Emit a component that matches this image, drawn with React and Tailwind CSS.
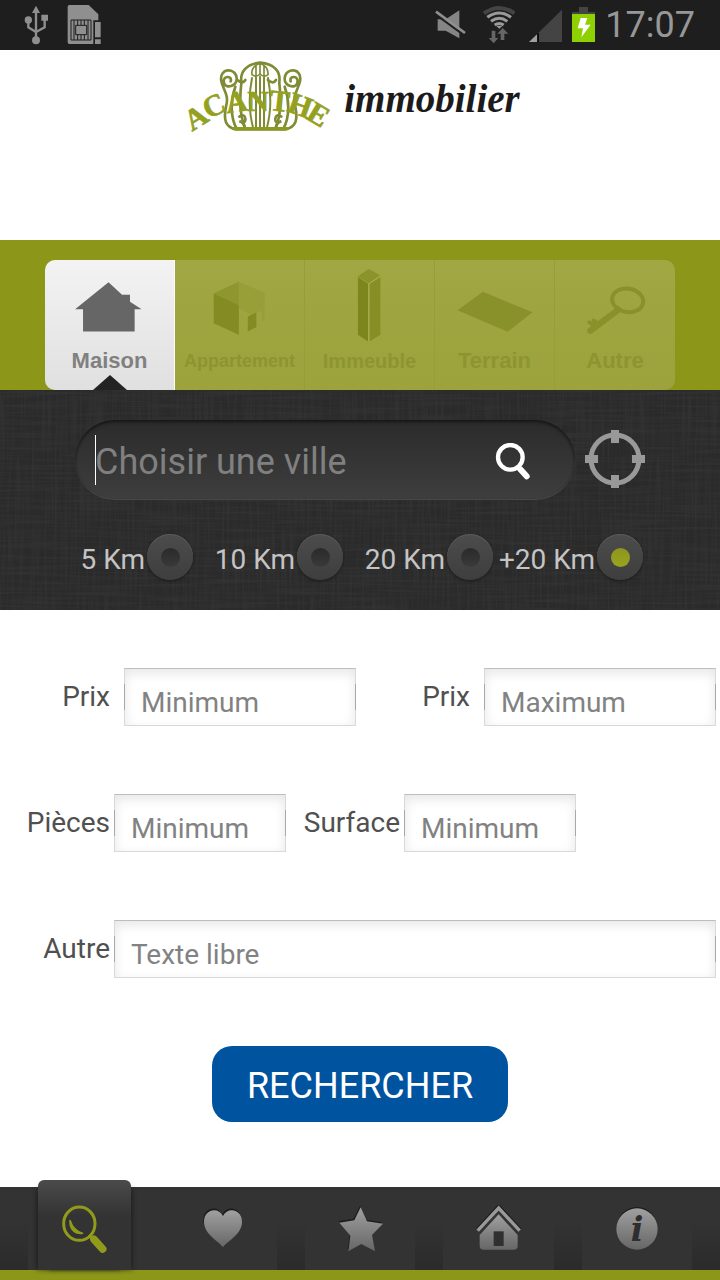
import { useState } from "react";

const TABS = [
    { key: "maison", title: "Maison", size: "text-[22px]", box: "0 0 390 270" },
    { key: "appartement", title: "Appartement", size: "text-lg", box: "0 0 390 270" },
    { key: "immeuble", title: "Immeuble", size: "text-xl", box: "0 0 390 270" },
    { key: "terrain", title: "Terrain", size: "text-[22px]", box: "0 0 360 270" },
    { key: "autre", title: "Autre", size: "text-[22px]", box: "0 0 360 270" },
];

const DISTANCES = ["5 Km", "10 Km", "20 Km", "+20 Km"];

const NAV_ITEMS = [
    { key: "search", title: "Rechercher" },
    { key: "favorites", title: "Favoris" },
    { key: "selection", title: "Sélection" },
    { key: "home", title: "Accueil" },
    { key: "info", title: "Informations" },
];

const TAB_ICONS = {
    maison: (
        <path fill="#666" d="M192 66 233 104h24v21l35 23h-21v67H115v-67H91z" />
    ),
    appartement: (
        <>
            <path fill="#999f38" d="M193 65 271 98v82l-9 4v-32l-30 14-39-21z" />
            <path fill="#8e9630" d="M117 100 193 65v73z" />
            <path fill="#838b23" d="M117 100 193 136v89l-76-35z" />
            <path fill="#838b23" d="M220 170 246 158v44l-26 13z" />
        </>
    ),
    immeuble: (
        <>
            <path fill="#8b932b" d="M193 26 228 46 193 70 160 48z" />
            <path fill="#7d851d" d="M160 50 191 71v174l-31-20z" />
            <path fill="#868e26" d="M195 71 228 50v175l-33 20z" />
            <path fill="none" stroke="#a9af55" strokeWidth="3" d="M193 245V71L228 48" />
        </>
    ),
    terrain: <path fill="#89922a" d="M145 95 295 157 220 216 68 151z" />,
    autre: (
        <g fill="none" stroke="#89922a">
            <ellipse cx="218" cy="121" rx="47" ry="35" strokeWidth="12" transform="rotate(10 218 121)" />
            <path d="M190 149 106 212" strokeWidth="19" strokeLinecap="round" />
            <path d="M103 187 122 200M116 182 128 190" strokeWidth="12" strokeLinecap="round" />
        </g>
    ),
};

const NAV_ICONS = {
    search: (
        <g transform="translate(-5 -1)">
            <ellipse cx="60" cy="57" rx="47" ry="50" fill="none" stroke="#919b1b" strokeWidth="9" />
            <path d="M32 46c-3 26 14 44 39 40-16-4-31-14-39-40z" fill="#919b1b" stroke="#919b1b" strokeWidth="4" />
            <path d="M90 90 99 100" stroke="#919b1b" strokeWidth="10" />
            <path d="M104 104 130 133" stroke="#919b1b" strokeWidth="23" strokeLinecap="round" />
        </g>
    ),
    favorites: (
        <>
            <path fill="#1c1c1c" d="M73 122C59 102 16 83 16 46c0-40 44-46 57-18 13-28 57-22 57 18 0 37-43 56-57 76z" />
            <path fill="url(#navGrey)" d="M75 127C61 107 18 88 18 51c0-40 44-46 57-18 13-28 57-22 57 18 0 37-43 56-57 76z" />
        </>
    ),
    selection: (
        <>
            <path fill="#1c1c1c" d="M72 2 91 44 138 52 106 85 115 134 74 112 35 134 41 87 8 48 53 41z" />
            <path fill="url(#navGrey)" d="M74 7 93 49 141 56 108 90 117 139 76 117 37 139 43 92 10 53 55 46z" />
        </>
    ),
    home: (
        <>
            <path d="M11 74 74 5 137 74" fill="none" stroke="#1c1c1c" strokeWidth="12" />
            <path fill="url(#navGrey)" d="M74 28 131 90v32q0 12-12 12H29q-12 0-12-12V90z" />
            <path d="M11 77 74 9 137 77" fill="none" stroke="#999" strokeWidth="10" />
            <path d="M59 79h30v44H59z" fill="#303030" />
        </>
    ),
    info: (
        <>
            <circle cx="72" cy="67" r="61" fill="#1c1c1c" />
            <circle cx="72" cy="72" r="62" fill="url(#navGrey)" />
            <text
                x="72"
                y="109"
                textAnchor="middle"
                fill="#2e2e2e"
                className="font-['DejaVu_Serif'] text-[100px] font-bold italic"
            >
                i
            </text>
        </>
    ),
};

function StatusBar() {
    return (
        <div className="flex h-[50px] items-center bg-[#1e1e1e] pl-6 pr-[25px]">
            {/* usb */}
            <svg viewBox="72 0 75 150" className="h-[50px] w-[25px]" fill="#8f8f8f">
                <path d="M108 17 120 39H96zM124 44h20v18h-20z" />
                <circle cx="85" cy="60" r="11" />
                <circle cx="108" cy="121" r="12" />
                <path d="M108 35V115M85 60V82L108 96M134 60V82L108 96" fill="none" stroke="#8f8f8f" strokeWidth="7" />
            </svg>
            {/* sim card */}
            <svg viewBox="200 0 105 150" className="ml-[18px] h-[50px] w-[35px]">
                <path d="M207 15h58l29 28v18h-15v71h-72q-5 0-5-5V20q0-5 5-5z" fill="#8f8f8f" />
                <path d="M284 66h17v46h-17zM284 118h17v14h-17z" fill="#8f8f8f" />
                <path d="M212 60h60v60h-60zM221 60v60M263 60v60M226 76h33v28h-33zM232 60v16M242 60v16M252 60v16M232 104v16M242 104v16M252 104v16" fill="none" stroke="#1e1e1e" strokeWidth="3" />
            </svg>

            <div className="ml-auto flex items-center">
                {/* sound off */}
                <svg viewBox="43 0 93 150" className="h-[50px] w-[31px]">
                    <path d="M51 58h24l41-27v84L75 92H51z" fill="#858585" />
                    <path d="M42 41 128 104" stroke="#1e1e1e" strokeWidth="6" />
                    <path d="M46 35 133 99" stroke="#8f8f8f" strokeWidth="8" />
                </svg>
                {/* wifi */}
                <svg viewBox="187 0 96 150" className="ml-[17px] h-[50px] w-8" fill="none">
                    <path d="M190 40Q236 8 281 40" stroke="#444" strokeWidth="12" />
                    <path d="M200 52Q236 26 271 52M211 64Q236 46 260 64M222 75Q236 66 249 75" stroke="#9a9a9a" strokeWidth="9" />
                    <path d="M226 77h20l-10 9z" fill="#9a9a9a" />
                    <path d="M213 92h11v22h9l-14 16-15-16h9zM240 120h11V101h12l-17-17-16 17h10z" fill="#666" />
                </svg>
                {/* signal */}
                <svg viewBox="327 0 99 150" className="ml-[14px] h-[50px] w-[33px]">
                    <path d="M426 29V126H327z" fill="#444" />
                    <path d="M353 101V126H327z" fill="#a0a0a0" />
                    <path d="M354 100V126" stroke="#000" strokeWidth="5" />
                </svg>
                {/* battery */}
                <svg viewBox="456 0 69 150" className="ml-[10px] h-[50px] w-[23px]">
                    <path d="M477 21h27v15h21v6h-69v-6h21z" fill="#444" />
                    <path d="M456 42h69v84h-69z" fill="#8fd003" />
                    <path d="M482 54h20l-7 20h17l-28 38 5-27h-16z" fill="#fff" />
                </svg>
                <span className="ml-[10px] text-4xl leading-[50px] text-[#979797]">17:07</span>
            </div>
        </div>
    );
}

function Logo() {
    return (
        <svg viewBox="0 0 480 300" className="h-[100px] w-40 overflow-visible" role="img" aria-label="Acanthe">
            <g fill="none" stroke="#7f8c35" strokeWidth="8" strokeLinecap="round">
                <path d="M152 94c6-18-26-18-20 4 4 20 40 12 38-14-3-32-54-32-46 10 6 28 24 40 14 76-8 40-2 60 28 68h152c30-8 36-28 28-68-10-36 8-48 14-76 8-42-43-42-46-10-2 26 34 34 38 14 6-22-26-22-20-4" />
                <path d="M184 96c-4-30 14-54 56-58 46 4 62 28 58 58M172 90q16 14 24 0M288 90q-8 14-24 0" />
                <path d="M216 74q-4-24 24-34 26 10 24 34-12 10-24-2-12 12-24 2zM228 46v30M240 40v34M252 46v30" strokeWidth="5" />
                <path d="M166 110c-14 40-16 90 4 126M314 110c14 40 16 90-4 126M184 100c-6 50-4 100 12 136M298 100c6 50 4 100-12 136" />
                <path d="M216 84c-10 50-10 100 4 152M264 84c10 50 10 100-4 152M228 82V236M240 80V238M252 82V236" strokeWidth="6" />
                <path d="M178 200q16-10 18 6t-18 8q14 4 16 18M304 200q-16-10-18 6t18 8q-14 4-16 18" />
            </g>
            <path d="M160 236h162" stroke="#8c9a1f" strokeWidth="10" strokeLinecap="round" />
            <text
                x="36 84 141 202 266 318 374"
                y="245 207 190 182 180 182 204"
                rotate="-32 -24 -8 0 6 20 31"
                fill="#94a11f"
                stroke="#94a11f"
                strokeWidth="2"
                className="font-['Liberation_Serif'] text-[90px] font-bold"
            >
                ACANTHE
            </text>
        </svg>
    );
}

function Linen() {
    return (
        <svg className="pointer-events-none absolute inset-0 h-full w-full opacity-8" aria-hidden="true">
            <filter id="weft" x="0" y="0" width="100%" height="100%">
                <feTurbulence type="fractalNoise" baseFrequency="0.015 0.4" numOctaves="2" seed="3" />
                <feColorMatrix values="0 0 0 0 0.35  0 0 0 0 0.35  0 0 0 0 0.35  2 0 0 0 -0.8" />
            </filter>
            <filter id="warp" x="0" y="0" width="100%" height="100%">
                <feTurbulence type="fractalNoise" baseFrequency="0.4 0.015" numOctaves="2" seed="8" />
                <feColorMatrix values="0 0 0 0 0.35  0 0 0 0 0.35  0 0 0 0 0.35  2 0 0 0 -0.8" />
            </filter>
            <rect width="100%" height="100%" filter="url(#weft)" />
            <rect width="100%" height="100%" filter="url(#warp)" />
        </svg>
    );
}

function Field({ id, placeholder, className }) {
    return (
        <div
            className={`relative h-[58px] before:absolute before:left-0 before:top-4 before:h-[26px] before:w-px before:bg-[#a8a8a8] after:absolute after:right-0 after:top-4 after:h-[26px] after:w-px after:bg-[#a8a8a8] ${className}`}
        >
            <input
                id={id}
                type="text"
                placeholder={placeholder}
                className="h-full w-full border border-[#d9d9d9] border-t-[#bdbdbd] bg-white pl-4 pt-[10px] text-[28px] text-[#505050] shadow-[inset_0_4px_12px_rgba(0,0,0,0.1)] outline-none placeholder:text-[#828282]"
            />
        </div>
    );
}

function Label({ htmlFor, children, className }) {
    return (
        <label htmlFor={htmlFor} className={`shrink-0 text-right text-[28px] leading-[58px] text-[#505050] ${className}`}>
            {children}
        </label>
    );
}

export default function App() {
    const [tab, setTab] = useState("maison");
    const [distance, setDistance] = useState("+20 Km");
    const [page, setPage] = useState("search");

    return (
        <div className="flex min-h-screen flex-col bg-white font-[Roboto,sans-serif]">
            <StatusBar />

            <header className="flex h-[190px] items-start justify-center gap-1 pr-5">
                <Logo />
                <span className="pt-[26px] font-['Liberation_Serif',serif] text-[39px] font-bold italic leading-[46px] text-[#1c1a1b]">
                    immobilier
                </span>
            </header>

            <div className="bg-[#8c9619] px-[45px] pt-5">
                <div role="tablist" className="grid grid-cols-[13fr_13fr_13fr_12fr_12fr] overflow-hidden rounded-[10px] bg-linear-to-b from-[#a0a743] to-[#9ca33c]">
                    {TABS.map((item) => {
                        const active = item.key === tab;

                        return (
                            <button
                                key={item.key}
                                type="button"
                                role="tab"
                                aria-selected={active}
                                onClick={() => setTab(item.key)}
                                className={`relative flex h-[130px] min-w-0 flex-col items-center border-r last:border-r-0 ${
                                    active
                                        ? "border-white bg-linear-to-b from-[#f3f3f3] to-[#e0e0e0] text-[#808080]"
                                        : "border-[#969e36] text-[#8c952f]"
                                }`}
                            >
                                <svg viewBox={item.box} className="h-[90px] w-full">
                                    {TAB_ICONS[item.key]}
                                </svg>
                                <span className={`font-['Liberation_Sans',sans-serif] font-bold leading-[22px] ${item.size}`}>
                                    {item.title}
                                </span>
                                {active && (
                                    <svg viewBox="0 0 34 15" className="absolute bottom-0 h-[15px] w-[34px]">
                                        <path d="M17 0 34 15H0z" fill="#232323" />
                                    </svg>
                                )}
                            </button>
                        );
                    })}
                </div>
            </div>

            <section className="relative h-[220px] bg-[#2a2a2a] pl-[45px] pr-[75px] pt-[30px]">
                <Linen />
                <div className="relative flex items-center gap-[10px] pl-[30px]">
                    <div className="relative flex h-20 min-w-0 flex-1 items-center rounded-full border-b border-[#484848] bg-linear-to-b from-[#2b2b2b] to-[#3e3e3e] pl-5 pr-[44px] shadow-[inset_0_2px_3px_#161616]">
                        <span className="absolute left-5 top-[15px] h-[50px] w-px bg-white" />
                        <input
                            type="text"
                            aria-label="Ville"
                            placeholder="Choisir une ville"
                            className="h-full min-w-0 flex-1 bg-transparent pt-1 text-4xl text-white outline-none placeholder:text-[#808080]"
                        />
                        <button type="button" aria-label="Rechercher la ville" className="pt-1">
                            <svg viewBox="345 130 108 111" className="h-[37px] w-9" fill="none" stroke="#fff">
                                <circle cx="391" cy="173" r="37" strokeWidth="13" />
                                <path d="M412 203 421 213" strokeWidth="10" />
                                <path d="M421 209 440 230" strokeWidth="18" strokeLinecap="round" />
                            </svg>
                        </button>
                    </div>
                    <button type="button" aria-label="Me localiser">
                        <svg viewBox="0 0 60 60" className="size-[60px]" fill="none" stroke="#999">
                            <circle cx="30" cy="29" r="24" strokeWidth="5" />
                            <path d="M30 0v13M30 45v13M0 29h13M47 29h13" strokeWidth="8" />
                        </svg>
                    </button>
                </div>

                <div className="relative mt-[34px] grid grid-cols-4">
                    {DISTANCES.map((item) => (
                        <label key={item} className="flex items-center justify-end gap-[2px] pr-[2px] text-[28px] text-[#c4c4c4]">
                            <span className="whitespace-nowrap pt-[6px] leading-[40px]">{item}</span>
                            <input
                                type="radio"
                                name="distance"
                                checked={distance === item}
                                onChange={() => setDistance(item)}
                                className="grid size-[46px] shrink-0 appearance-none place-items-center rounded-full bg-linear-to-b from-[#4c4c4c] to-[#3e3e3e] shadow-[0_1px_3px_#1a1a1a,inset_0_1px_0_#5a5a5a] before:size-[19px] before:rounded-full before:bg-linear-to-b before:from-[#2a2a2a] before:to-[#3a3a3a] checked:before:from-[#8c961c] checked:before:to-[#99a420]"
                            />
                        </label>
                    ))}
                </div>
            </section>

            <form className="flex flex-1 flex-col gap-[68px] pt-[58px] pb-16" onSubmit={(e) => e.preventDefault()}>
                <div className="flex">
                    <div className="flex flex-1 gap-[14px] pr-1">
                        <Label htmlFor="prix-min" className="w-[110px]">Prix</Label>
                        <Field id="prix-min" placeholder="Minimum" className="min-w-0 flex-1" />
                    </div>
                    <div className="flex flex-1 gap-[14px] pr-1">
                        <Label htmlFor="prix-max" className="w-[110px]">Prix</Label>
                        <Field id="prix-max" placeholder="Maximum" className="min-w-0 flex-1" />
                    </div>
                </div>

                <div className="flex gap-1">
                    <Label htmlFor="pieces" className="w-[110px]">Pièces</Label>
                    <Field id="pieces" placeholder="Minimum" className="w-[172px]" />
                    <Label htmlFor="surface" className="w-[110px]">Surface</Label>
                    <Field id="surface" placeholder="Minimum" className="w-[172px]" />
                </div>

                <div className="flex gap-1 pr-1">
                    <Label htmlFor="autre" className="w-[110px]">Autre</Label>
                    <Field id="autre" placeholder="Texte libre" className="min-w-0 flex-1" />
                </div>

                <button type="submit" className="h-[76px] self-center rounded-[20px] bg-[#00539f] px-[35px] pt-1 text-4xl text-white">
                    RECHERCHER
                </button>
            </form>

            <nav className="flex h-[93px] border-b-10 border-[#8c9619] bg-[#333]">
                <svg className="absolute size-0" aria-hidden="true">
                    <linearGradient id="navGrey" x1="0" y1="0" x2="0" y2="1">
                        <stop offset="0" stopColor="#a0a0a0" />
                        <stop offset="1" stopColor="#666" />
                    </linearGradient>
                </svg>
                <div className="w-7 bg-linear-to-b from-[#333] from-40% to-[#2b2b2b]" />
                {NAV_ITEMS.map((item) => {
                    const active = item.key === page;

                    return (
                        <div key={item.key} className="flex flex-1">
                            <a
                                href={`#${item.key}`}
                                aria-label={item.title}
                                onClick={() => setPage(item.key)}
                                className={`flex flex-1 items-center justify-center ${
                                    active
                                        ? "-mt-[7px] ml-[10px] mr-[7px] rounded-t-md bg-linear-to-b from-[#4b4b4b] to-[#333] to-40% pt-[7px] shadow-[6px_4px_5px_-5px_#1c1c1c,-6px_4px_5px_-5px_#1c1c1c]"
                                        : ""
                                }`}
                            >
                                <svg viewBox="0 0 144 144" className="size-12 shrink-0">
                                    {NAV_ICONS[item.key]}
                                </svg>
                            </a>
                            <div className={active ? "w-7" : "w-7 bg-linear-to-b from-[#333] from-40% to-[#2b2b2b]"} />
                        </div>
                    );
                })}
            </nav>
        </div>
    );
}
